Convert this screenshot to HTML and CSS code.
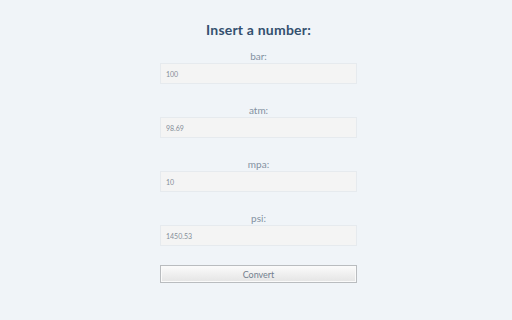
FILE: index.html
```html
<!DOCTYPE html>
<html>

<head>
    <link rel="stylesheet" href="styles.css">
</head>

<body>

    <div class="converter">
        <h1 class="title">Insert a number:</h1>

        <div class="field">
            <label for="bar">bar:</label>
            <input id="bar" type="text" value="100">
        </div>
        <div class="field">
            <label for="atm">atm:</label>
            <input id="atm" type="text" value="98.69">
        </div>
        <div class="field">
            <label for="mpa">mpa:</label>
            <input id="mpa" type="text" value="10">
        </div>
        <div class="field">
            <label for="psi">psi:</label>
            <input id="psi" type="text" value="1450.53">
        </div>

        <button class="convert">Convert</button>
    </div>

</body>

</html>
```

FILE: styles.css
```css
body {
    margin: 0;
    padding: 0 0 0 5px;
    background-color: #f0f4f8;
    font-family: Lato, "Open Sans", sans-serif;
}

.converter {
    width: 197px;
    margin: 0 auto;
    padding-top: 20px;
    display: flex;
    flex-direction: column;
}

.title {
    margin: 0 0 10px;
    font-size: 14px;
    line-height: 20px;
    font-weight: bold;
    text-align: center;
    color: #34506f;
    letter-spacing: 0.2px;
}

.field {
    display: flex;
    flex-direction: column;
    margin-bottom: 20px;
}

.field label {
    font-size: 10px;
    line-height: 12px;
    text-align: center;
    color: #8391a1;
    margin-bottom: 1px;
}

.field input {
    box-sizing: border-box;
    height: 21px;
    width: 100%;
    margin: 0;
    padding: 0 5px;
    border: 1px solid #e6eaee;
    background-color: #f4f4f4;
    font-family: Lato, sans-serif;
    font-size: 7px;
    color: #858e98;
    outline: none;
}

.convert {
    box-sizing: border-box;
    height: 18px;
    width: 100%;
    margin-top: -1px;
    padding: 0;
    border: 1px solid #b9bcbf;
    box-shadow: inset 0 0 0 1px #fafafa;
    background: linear-gradient(#fbfbfb, #e4e4e4);
    font-family: Lato, sans-serif;
    font-size: 9px;
    color: #73808e;
    cursor: pointer;
}
```
